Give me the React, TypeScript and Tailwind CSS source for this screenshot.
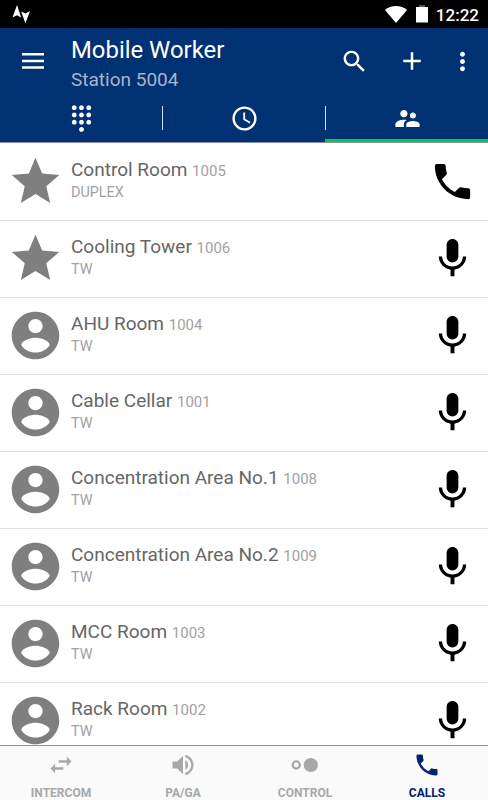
import React from 'react';
import clsx from 'clsx';

const paths = {
  search:
    'M15.5 14h-.79l-.28-.27C15.41 12.59 16 11.11 16 9.5 16 5.91 13.09 3 9.5 3S3 5.91 3 9.5 5.91 16 9.5 16c1.61 0 3.09-.59 4.23-1.57l.27.28v.79l5 4.99L20.49 19l-4.99-5zm-6 0C7.01 14 5 11.99 5 9.5S7.01 5 9.5 5 14 7.01 14 9.5 11.99 14 9.5 14z',
  add: 'M19 13h-6v6h-2v-6H5v-2h6V5h2v6h6v2z',
  more: 'M12 8c1.1 0 2-.9 2-2s-.9-2-2-2-2 .9-2 2 .9 2 2 2zm0 2c-1.1 0-2 .9-2 2s.9 2 2 2 2-.9 2-2-.9-2-2-2zm0 6c-1.1 0-2 .9-2 2s.9 2 2 2 2-.9 2-2-.9-2-2-2z',
  dialpad:
    'M12 19c-1.1 0-2 .9-2 2s.9 2 2 2 2-.9 2-2-.9-2-2-2zM6 1c-1.1 0-2 .9-2 2s.9 2 2 2 2-.9 2-2-.9-2-2-2zm0 6c-1.1 0-2 .9-2 2s.9 2 2 2 2-.9 2-2-.9-2-2-2zm0 6c-1.1 0-2 .9-2 2s.9 2 2 2 2-.9 2-2-.9-2-2-2zm12-8c1.1 0 2-.9 2-2s-.9-2-2-2-2 .9-2 2 .9 2 2 2zm-6 8c-1.1 0-2 .9-2 2s.9 2 2 2 2-.9 2-2-.9-2-2-2zm6 0c-1.1 0-2 .9-2 2s.9 2 2 2 2-.9 2-2-.9-2-2-2zm0-6c-1.1 0-2 .9-2 2s.9 2 2 2 2-.9 2-2-.9-2-2-2zm-6 0c-1.1 0-2 .9-2 2s.9 2 2 2 2-.9 2-2-.9-2-2-2zm0-6c-1.1 0-2 .9-2 2s.9 2 2 2 2-.9 2-2-.9-2-2-2z',
  clock:
    'M11.99 2C6.47 2 2 6.48 2 12s4.47 10 9.99 10C17.52 22 22 17.52 22 12S17.52 2 11.99 2zM12 20c-4.42 0-8-3.58-8-8s3.58-8 8-8 8 3.58 8 8-3.58 8-8 8zM12.5 7H11v6l5.25 3.15.75-1.23-4.5-2.67z',
  people:
    'M16.5 12c1.38 0 2.49-1.12 2.49-2.5S17.88 7 16.5 7C15.12 7 14 8.12 14 9.5s1.12 2.5 2.5 2.5zM9 11c1.66 0 2.99-1.34 2.99-3S10.66 5 9 5C7.34 5 6 6.34 6 8s1.34 3 3 3zm7.5 3c-1.83 0-5.5.92-5.5 2.75V19h11v-2.25c0-1.83-3.67-2.75-5.5-2.75zM9 13c-2.33 0-7 1.17-7 3.5V19h7v-2.25c0-.85.33-2.34 2.37-3.47C10.5 13.1 9.66 13 9 13z',
  star: 'M12 17.27L18.18 21l-1.64-7.03L22 9.24l-7.19-.61L12 2 9.19 8.63 2 9.24l5.46 4.73L5.82 21z',
  account:
    'M12 2C6.48 2 2 6.48 2 12s4.48 10 10 10 10-4.48 10-10S17.52 2 12 2zm0 3c1.66 0 3 1.34 3 3s-1.34 3-3 3-3-1.34-3-3 1.34-3 3-3zm0 14.2c-2.5 0-4.71-1.28-6-3.22.03-1.99 4-3.08 6-3.08 1.99 0 5.97 1.09 6 3.08-1.29 1.94-3.5 3.22-6 3.22z',
  mic: 'M12 14c1.66 0 2.99-1.34 2.99-3L15 5c0-1.66-1.34-3-3-3S9 3.34 9 5v6c0 1.66 1.34 3 3 3zm5.3-3c0 3-2.54 5.1-5.3 5.1S6.7 14 6.7 11H5c0 3.41 2.72 6.23 6 6.72V21h2v-3.28c3.28-.48 6-3.3 6-6.72h-1.7z',
  phone:
    'M6.62 10.79c1.44 2.83 3.76 5.14 6.59 6.59l2.2-2.2c.27-.27.67-.36 1.02-.24 1.12.37 2.33.57 3.57.57.55 0 1 .45 1 1V20c0 .55-.45 1-1 1-9.39 0-17-7.61-17-17 0-.55.45-1 1-1h3.5c.55 0 1 .45 1 1 0 1.25.2 2.45.57 3.57.11.35.03.74-.25 1.02l-2.2 2.2z',
  swap: 'M6.99 11L3 15l3.99 4v-3H14v-2H6.99v-3zM21 9l-3.99-4v3H10v2h7.01v3L21 9z',
  volume:
    'M3 9v6h4l5 5V4L7 9H3zm13.5 3c0-1.77-1.02-3.29-2.5-4.03v8.05c1.48-.73 2.5-2.25 2.5-4.02zM14 3.23v2.06c2.89.86 5 3.54 5 6.71s-2.11 5.85-5 6.71v2.06c4.01-.91 7-4.49 7-8.77s-2.99-7.86-7-8.77z',
  control:
    'M4.5 8A4 4 0 1 0 4.5 16A4 4 0 1 0 4.5 8zM4.5 9.9A2.1 2.1 0 1 1 4.5 14.1A2.1 2.1 0 1 1 4.5 9.9zM17 5.9A6.1 6.1 0 1 0 17 18.1A6.1 6.1 0 1 0 17 5.9z',
};

type IconName = keyof typeof paths;

function Icon({ name, className }: { name: IconName; className?: string }) {
  return (
    <svg viewBox="0 0 24 24" fill="currentColor" className={clsx('shrink-0 overflow-visible', className)}>
      <path fillRule="evenodd" d={paths[name]} />
    </svg>
  );
}

interface Contact {
  name: string;
  number: string;
  mode: string;
  favorite?: boolean;
}

const contacts: Contact[] = [
  { name: 'Control Room', number: '1005', mode: 'DUPLEX', favorite: true },
  { name: 'Cooling Tower', number: '1006', mode: 'TW', favorite: true },
  { name: 'AHU Room', number: '1004', mode: 'TW' },
  { name: 'Cable Cellar', number: '1001', mode: 'TW' },
  { name: 'Concentration Area No.1', number: '1008', mode: 'TW' },
  { name: 'Concentration Area No.2', number: '1009', mode: 'TW' },
  { name: 'MCC Room', number: '1003', mode: 'TW' },
  { name: 'Rack Room', number: '1002', mode: 'TW' },
];

const tabs: { id: string; icon: IconName }[] = [
  { id: 'dialpad', icon: 'dialpad' },
  { id: 'history', icon: 'clock' },
  { id: 'contacts', icon: 'people' },
];

const navItems: { label: string; icon: IconName }[] = [
  { label: 'INTERCOM', icon: 'swap' },
  { label: 'PA/GA', icon: 'volume' },
  { label: 'CONTROL', icon: 'control' },
  { label: 'CALLS', icon: 'phone' },
];

function StatusBar() {
  return (
    <div className="flex h-7 shrink-0 items-center bg-black pl-3 pr-[9px] text-white">
      <svg viewBox="0 0 18 20" fill="currentColor" className="h-5 w-[18px]">
        <path d="M5 1L.5 13.6L5 11.2L9.2 13.6zM13.4 19.6L9.2 7.4L13.4 9.6L18 7z" />
      </svg>
      <svg viewBox="0 0 22 17" fill="currentColor" className="ml-auto h-[17px] w-[22px]">
        <path d="M0 4C6 -1.2 16 -1.2 22 4L11 17z" />
      </svg>
      <svg viewBox="0 0 12 18" className="ml-[9px] h-[18px] w-3">
        <path d="M3 0H9V2H3z" fill="#555" />
        <path d="M0 2H12V17.5H0z" fill="currentColor" />
      </svg>
      <span className="ml-2 mt-[2px] text-[17px] font-medium leading-5">12:22</span>
    </div>
  );
}

function Header() {
  return (
    <header className="flex h-[115px] shrink-0 flex-col border-b border-[#8c8fa5] bg-[#003173] text-white">
      <div className="flex h-[66px] shrink-0 items-center">
        <svg viewBox="0 0 22 16" fill="currentColor" className="ml-[22px] h-4 w-[22px]">
          <path d="M0 0H22V2.5H0zM0 6.7H22V9.2H0zM0 13.3H22V15.8H0z" />
        </svg>
        <div className="ml-[27px] mt-[7px]">
          <h1 className="text-[23.9px] leading-[29px]">Mobile Worker</h1>
          <p className="pt-px text-[19px] leading-[28px] text-[#a8b4cc]">Station 5004</p>
        </div>
        <Icon name="search" className="ml-auto size-[29px]" />
        <Icon name="add" className="ml-7 size-[30px]" />
        <Icon name="more" className="ml-[20.5px] mr-[11.5px] size-[29px]" />
      </div>
      <div className="grid flex-1 grid-cols-3">
        {tabs.map((tab, index) => (
          <div
            key={tab.id}
            className={clsx(
              'relative flex justify-center pt-[10px]',
              index > 0 && 'pl-px',
              index === 2 && 'border-b-[3px] border-[#05c94f]'
            )}
          >
            <Icon name={tab.icon} className="size-[29px]" />
            {index < 2 && (
              <div
                className={clsx(
                  'absolute top-[12px] h-6 w-px bg-[#d5dcea]',
                  index === 0 ? 'right-0' : '-right-px'
                )}
              />
            )}
          </div>
        ))}
      </div>
    </header>
  );
}

function ContactRow({ contact }: { contact: Contact }) {
  return (
    <li className="flex h-[77px] shrink-0 items-center border-b border-[#e0e0e0] pb-px pl-[7px] pr-3">
      <Icon name={contact.favorite ? 'star' : 'account'} className="size-[57px] text-[#7f7f7f]" />
      <div className="ml-[7px] flex-1 pb-[3px]">
        <p className="text-[19px] leading-6 text-[#666666]">
          {contact.name} <span className="text-[15px] text-[#a2a2a2]">{contact.number}</span>
        </p>
        <p className="text-[14.4px] leading-5 text-[#a2a2a2]">{contact.mode}</p>
      </div>
      <Icon name={contact.mode === 'DUPLEX' ? 'phone' : 'mic'} className="size-[47px] text-black" />
    </li>
  );
}

function BottomNav() {
  return (
    <nav className="grid h-[55px] shrink-0 grid-cols-4 border-t border-[#8f8f8f] bg-[#fafafa]">
      {navItems.map((item) => (
        <div
          key={item.label}
          className={clsx(
            'flex flex-col items-center pt-[5px]',
            item.label === 'CALLS' ? 'text-[#00246f]' : 'text-[#a8a8a8]'
          )}
        >
          <Icon name={item.icon} className="size-7" />
          <span className="mt-[6px] text-[12px] font-bold leading-4">{item.label}</span>
        </div>
      ))}
    </nav>
  );
}

export default function App() {
  return (
    <div className="flex h-[800px] w-[488px] flex-col overflow-hidden bg-white font-[Roboto,sans-serif]">
      <StatusBar />
      <Header />
      <ul className="flex min-h-0 flex-1 flex-col overflow-hidden pt-px">
        {contacts.map((contact) => (
          <ContactRow key={contact.number} contact={contact} />
        ))}
      </ul>
      <BottomNav />
    </div>
  );
}
